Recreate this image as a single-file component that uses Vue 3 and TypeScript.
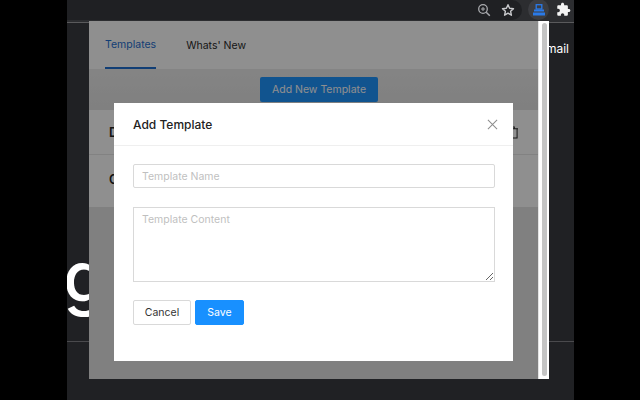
<script setup lang="ts">
const rows = [
  { id: 1, name: 'Default', tall: false },
  { id: 2, name: 'Custom', tall: true },
]
</script>

<template>
  <div class="stage">
    <div class="browser">
      <header class="toolbar">
        <div class="omnibox">
          <svg class="tool-icon" viewBox="0 0 14 14" width="14" height="14">
            <circle cx="6" cy="6" r="4.300" fill="none" stroke="#a8a9ad" stroke-width="1.300" />
            <path d="M9.200 9.200l3.600 3.600" stroke="#a8a9ad" stroke-width="1.500" />
            <path d="M4 6h4M6 4v4" stroke="#a8a9ad" stroke-width="1" />
          </svg>
          <svg class="tool-icon" viewBox="0 0 14 14" width="14" height="14">
            <path d="M7 1.700l1.600 3.600 3.900.4-2.900 2.600.8 3.900L7 10.200l-3.400 2 .8-3.900L1.500 5.700l3.900-.4z" fill="none" stroke="#c8c9cc" stroke-width="1.400" stroke-linejoin="round" />
          </svg>
        </div>
        <div class="ext-active">
          <svg viewBox="0 0 12 12" width="12" height="12">
            <rect x="3.200" y="0.700" width="5.600" height="4.300" fill="none" stroke="#2a7ae8" stroke-width="1.300" />
            <rect x="1" y="5.500" width="10" height="2" fill="#2a7ae8" />
            <rect x="0" y="8.500" width="12" height="3" fill="#2a7ae8" />
          </svg>
        </div>
        <svg class="puzzle" viewBox="0 0 24 24" width="15" height="15">
          <path fill="#f4f4f4" d="M20.500 11H19V7c0-1.100-.9-2-2-2h-4V3.500C13 2.120 11.880 1 10.500 1S8 2.120 8 3.500V5H4c-1.100 0-1.990.9-1.990 2v3.800H3.500c1.490 0 2.700 1.210 2.700 2.700s-1.210 2.700-2.700 2.700H2V20c0 1.100.9 2 2 2h3.800v-1.500c0-1.490 1.210-2.700 2.700-2.700 1.490 0 2.700 1.210 2.700 2.700V22H17c1.100 0 2-.9 2-2v-4h1.500c1.380 0 2.500-1.120 2.500-2.500S21.880 11 20.500 11z" />
        </svg>
      </header>

      <main class="page">
        <span class="page-mail">Gmail</span>
        <span class="page-title">g</span>
        <div class="page-rule"></div>

        <section class="popup">
          <div class="popup-body">
            <nav class="tabs">
              <a class="tab tab--active">Templates</a>
              <a class="tab">Whats' New</a>
            </nav>
            <div class="actions">
              <button class="add-btn" type="button">Add New Template</button>
            </div>
            <ul class="list">
              <li v-for="row in rows" :key="row.id" class="row" :class="{ 'row--tall': row.tall }">
                <span class="row-name">{{ row.name }}</span>
                <svg v-if="!row.tall" class="row-trash" viewBox="0 0 12 14" width="11" height="13">
                  <path d="M0 3h12M4 3V1h4v2M2 3v10h9V3" fill="none" stroke="#2a2a2a" stroke-width="1.100" />
                </svg>
              </li>
            </ul>
          </div>
          <div class="scrollbar"><div class="thumb"></div></div>

          <div class="mask"></div>
          <div class="modal">
            <div class="modal-head">
              <span class="modal-title">Add Template</span>
              <svg viewBox="0 0 12 12" width="11" height="11">
                <path d="M1 1l10 10M11 1L1 11" stroke="#8c8c8c" stroke-width="1.100" />
              </svg>
            </div>
            <form class="modal-form" @submit.prevent>
              <input class="field" type="text" placeholder="Template Name" />
              <textarea class="field field--area" placeholder="Template Content"></textarea>
              <div class="buttons">
                <button class="btn" type="button">Cancel</button>
                <button class="btn btn--primary" type="submit">Save</button>
              </div>
            </form>
          </div>
        </section>
      </main>
    </div>
  </div>
</template>

<style scoped>
.stage {
  display: flex;
  justify-content: flex-start;
  width: 640px;
  height: 400px;
  padding-left: 67px;
  box-sizing: border-box;
  background: #000;
  font-family: Inter, 'Liberation Sans', sans-serif;
  overflow: hidden;
}
.browser {
  display: flex;
  flex-direction: column;
  width: 507px;
  height: 400px;
  background: #202124;
  overflow: hidden;
}
.toolbar {
  display: flex;
  align-items: flex-start;
  flex: 0 0 23px;
  box-sizing: border-box;
  background: #2c2d30;
  border-bottom: 1px solid #5a5a5c;
}
.omnibox {
  display: flex;
  align-items: center;
  justify-content: flex-end;
  gap: 10px;
  width: 455px;
  height: 20px;
  padding-right: 7px;
  box-sizing: border-box;
  background: #1f2023;
  border-radius: 0 10px 10px 0;
}
.ext-active {
  display: flex;
  align-items: center;
  justify-content: center;
  width: 21px;
  height: 21px;
  margin: -1px 0 0 6px;
  border-radius: 50%;
  background: #3c3d41;
}
.puzzle {
  margin: 2px 0 0 7px;
}
.page {
  position: relative;
  flex: 1;
  color: #fff;
}
.page-mail {
  position: absolute;
  top: 18px;
  left: 470px;
  font-size: 12px;
  line-height: 16px;
}
.page-title {
  position: absolute;
  top: 209px;
  left: -4px;
  font-size: 70px;
  font-weight: 500;
  line-height: 90px;
}
.page-rule {
  position: absolute;
  top: 318px;
  left: 0;
  width: 100%;
  height: 1px;
  background: #4a4a4d;
}
.popup {
  position: absolute;
  top: -2px;
  left: 22px;
  display: flex;
  width: 460px;
  height: 358px;
  overflow: hidden;
}
.popup-body {
  flex: 1;
  background: #e4e4e4;
  color: #222;
}
.tabs {
  display: flex;
  gap: 30px;
  height: 48px;
  padding-left: 16px;
  background: #fff;
}
.tab {
  display: flex;
  align-items: center;
  height: 48px;
  box-sizing: border-box;
  font-size: 10.500px;
  color: #2b2b2b;
}
.tab--active {
  color: #1f6fd0;
  border-bottom: 2px solid #1f6fd0;
}
.actions {
  display: flex;
  justify-content: center;
  height: 41px;
  padding: 8px 0 0 11px;
  box-sizing: border-box;
  background: linear-gradient(#ececec, #e4e4e4);
}
.add-btn {
  width: 118px;
  height: 25px;
  padding: 0;
  border: 0;
  border-radius: 2px;
  background: #1f96ff;
  color: #fff;
  font: inherit;
  font-size: 10.500px;
}
.list {
  margin: 0;
  padding: 0;
  list-style: none;
}
.row {
  display: flex;
  align-items: center;
  justify-content: space-between;
  height: 44px;
  padding: 0 20px;
  background: #fff;
  border-bottom: 1px solid #e8e8e8;
  font-size: 12.500px;
  font-weight: 600;
}
.row--tall {
  height: 52px;
  padding-bottom: 3px;
  box-sizing: border-box;
  border-bottom: 0;
}
.scrollbar {
  flex: 0 0 11px;
  padding: 2px 2px 3px 3px;
  box-sizing: border-box;
  background: #fff;
  border-left: 1px solid #e3e3e3;
}
.thumb {
  height: 100%;
  border-radius: 3px;
  background: #c4c4c4;
}
.mask {
  position: absolute;
  inset: 0 11px 0 0;
  background: rgba(0, 0, 0, 0.44);
}
.modal {
  position: absolute;
  top: 82px;
  left: 25px;
  width: 399px;
  height: 258px;
  background: #fff;
  color: #222;
}
.modal-head {
  display: flex;
  align-items: center;
  justify-content: space-between;
  height: 42px;
  padding: 0 15px 0 19px;
  border-bottom: 1px solid #efefef;
}
.modal-title {
  font-size: 12px;
  font-weight: 500;
}
.modal-form {
  display: flex;
  flex-direction: column;
  padding: 18px 18px 0 19px;
}
.field {
  display: block;
  width: 100%;
  height: 24px;
  padding: 0 8px;
  box-sizing: border-box;
  border: 1px solid #d9d9d9;
  border-radius: 2px;
  background: #fff;
  outline: none;
  font: inherit;
  font-size: 10.500px;
}
.field::placeholder {
  color: #bfbfbf;
}
.field--area {
  height: 75px;
  margin-top: 19px;
  padding: 5px 8px;
  border-radius: 0;
  resize: vertical;
}
.buttons {
  display: flex;
  gap: 4px;
  margin-top: 18px;
}
.btn {
  width: 58px;
  height: 25px;
  padding: 0;
  border: 1px solid #d9d9d9;
  border-radius: 2px;
  background: #fff;
  color: #333;
  font: inherit;
  font-size: 10.500px;
}
.btn--primary {
  width: 49px;
  border-color: #1890ff;
  background: #1890ff;
  color: #fff;
}
</style>

<style>
html,
body {
  background: #000;
}
</style>
